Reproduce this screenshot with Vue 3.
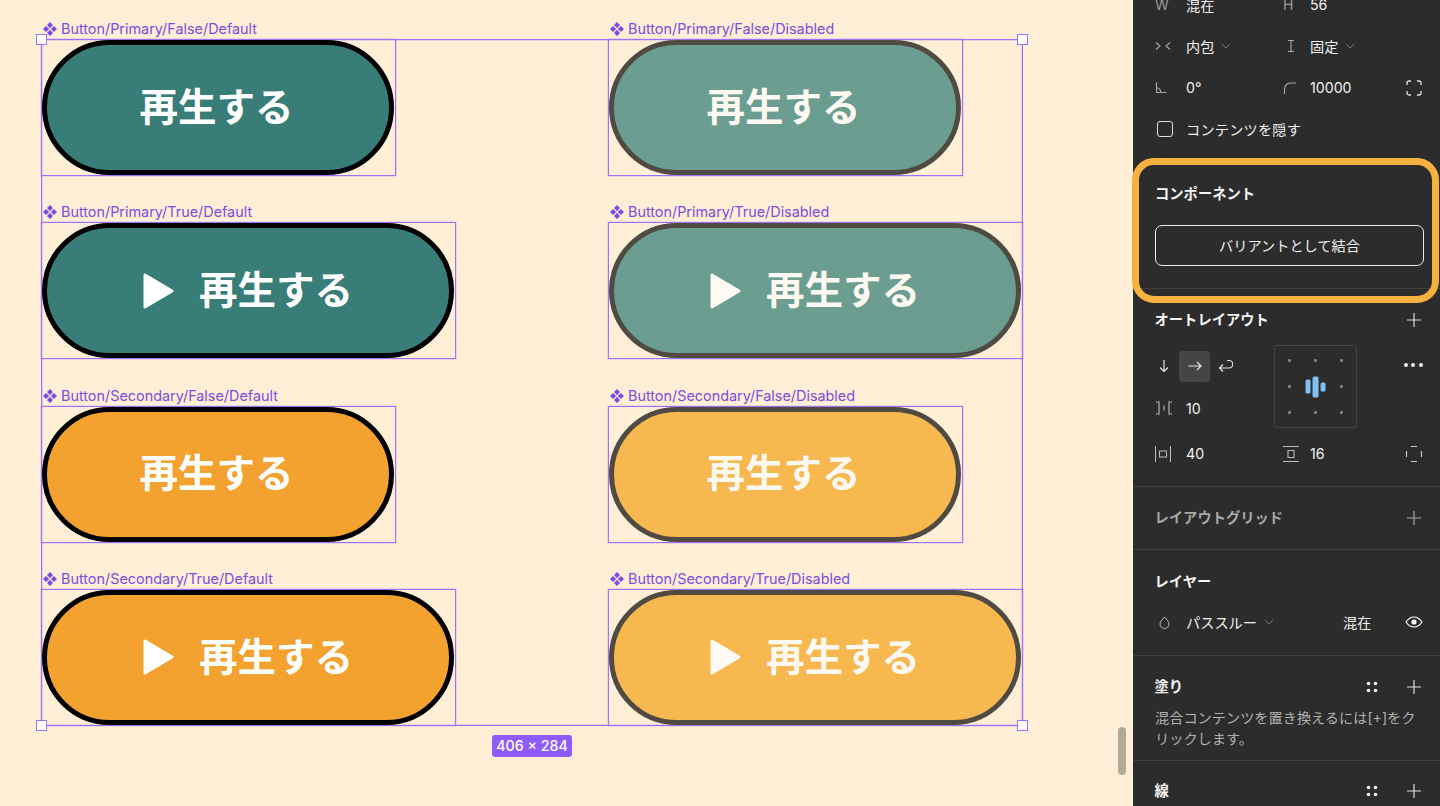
<script setup>
const buttons = [
  { name: 'Button/Primary/False/Default', tone: 'primary', icon: false, disabled: false },
  { name: 'Button/Primary/False/Disabled', tone: 'primary', icon: false, disabled: true },
  { name: 'Button/Primary/True/Default', tone: 'primary', icon: true, disabled: false },
  { name: 'Button/Primary/True/Disabled', tone: 'primary', icon: true, disabled: true },
  { name: 'Button/Secondary/False/Default', tone: 'secondary', icon: false, disabled: false },
  { name: 'Button/Secondary/False/Disabled', tone: 'secondary', icon: false, disabled: true },
  { name: 'Button/Secondary/True/Default', tone: 'secondary', icon: true, disabled: false },
  { name: 'Button/Secondary/True/Disabled', tone: 'secondary', icon: true, disabled: true }
]
</script>

<template>
  <div class="page">
    <main class="canvas">
      <div class="frame">
        <div v-for="b in buttons" :key="b.name" class="cell" :class="{ wide: b.icon }">
          <div class="tag">
            <svg width="14" height="14" viewBox="0 0 14 14"><path d="M7 0 10 3 7 6.200 4 3ZM3 4 6.200 7 3 10 0 7ZM11 4 14 7 11 10 7.800 7ZM7 7.800 10 11 7 14 4 11Z" fill="#7b4ce0"/></svg>
            <span>{{ b.name }}</span>
          </div>
          <div class="btn" :class="[b.tone, { off: b.disabled, bare: !b.icon }]">
            <svg v-if="b.icon" class="play" width="31" height="36" viewBox="0 0 31 36"><path d="M2 2 29 18 2 34Z" fill="currentColor" stroke="currentColor" stroke-width="3" stroke-linejoin="round"/></svg>
            <span class="label">再生する</span>
          </div>
        </div>
        <i class="handle tl"></i><i class="handle tr"></i><i class="handle bl"></i><i class="handle br"></i>
        <div class="size">406 × 284</div>
      </div>
      <div class="scroll"></div>
    </main>

    <aside class="panel">
      <section class="props">
        <div class="row">
          <span class="ico t">W</span><span>混在</span><span class="ico t">H</span><span>56</span>
        </div>
        <div class="row">
          <svg class="ico" width="16" height="12" viewBox="0 0 16 12"><path d="M1 2.500 5 6 1 9.500M15 2.500 11 6l4 3.500" fill="none" stroke="#aaa" stroke-width="1.100"/></svg>
          <span class="sel">内包<svg width="10" height="6" viewBox="0 0 10 6"><path d="M1 1l4 4 4-4" fill="none" stroke="#777"/></svg></span>
          <svg class="ico" width="16" height="16" viewBox="0 0 16 16"><path d="M5 2.500h6M5 13.500h6M8 2.500v11" fill="none" stroke="#aaa" stroke-width="1.100"/></svg>
          <span class="sel">固定<svg width="10" height="6" viewBox="0 0 10 6"><path d="M1 1l4 4 4-4" fill="none" stroke="#777"/></svg></span>
        </div>
        <div class="row">
          <svg class="ico" width="14" height="14" viewBox="0 0 14 14"><path d="M1.500 1.500v10h10M1.500 6.500c2.500.5 4 2.300 4.500 5" fill="none" stroke="#aaa" stroke-width="1.100"/></svg>
          <span>0°</span>
          <svg class="ico" width="14" height="14" viewBox="0 0 14 14"><path d="M1.500 13V8a6 6 0 0 1 6-6H13" fill="none" stroke="#aaa" stroke-width="1.100"/></svg>
          <span>10000</span>
          <svg class="end" width="16" height="16" viewBox="0 0 16 16"><path d="M1 5V3a2 2 0 0 1 2-2h2M11 1h2a2 2 0 0 1 2 2v2M15 11v2a2 2 0 0 1-2 2h-2M5 15H3a2 2 0 0 1-2-2v-2" fill="none" stroke="#e4e4e4" stroke-width="1.300"/></svg>
        </div>
        <div class="row">
          <i class="check"></i><span class="span3">コンテンツを隠す</span>
        </div>
      </section>

      <section class="comp">
        <h3>コンポーネント</h3>
        <div class="merge">バリアントとして結合</div>
      </section>
      <div class="ring"></div>

      <section class="auto">
        <div class="head"><h3>オートレイアウト</h3><svg class="plus" width="14" height="14" viewBox="0 0 14 14"><path d="M7 0v14M0 7h14" stroke="#ddd" stroke-width="1.200"/></svg></div>
        <div class="auto-grid">
          <div class="auto-left">
            <div class="dirs">
              <span class="dir"><svg width="12" height="14" viewBox="0 0 12 14"><path d="M6 1v11.500M2 8.500l4 4 4-4" fill="none" stroke="#e6e6e6" stroke-width="1.200"/></svg></span>
              <span class="dir on"><svg width="14" height="12" viewBox="0 0 14 12"><path d="M.500 6H13M9 2l4 4-4 4" fill="none" stroke="#e6e6e6" stroke-width="1.200"/></svg></span>
              <span class="dir"><svg width="15" height="14" viewBox="0 0 15 14"><path d="M9 1.500h2a3 3 0 0 1 0 7.500H1.500M5 5.500 1.500 9 5 12.500" fill="none" stroke="#e6e6e6" stroke-width="1.200"/></svg></span>
            </div>
            <div class="gap-row">
              <svg width="18" height="14" viewBox="0 0 18 14"><path d="M1 1h3v12H1M17 1h-3v12h3M9 4.500v5" fill="none" stroke="#bbb" stroke-width="1.100"/></svg>
              <span>10</span>
            </div>
          </div>
          <div class="align">
            <i v-for="n in 9" :key="n" class="dot"></i>
            <div class="bars"><b class="m"></b><b class="l"></b><b class="s"></b></div>
          </div>
          <div class="more"><i></i><i></i><i></i></div>
        </div>
        <div class="row pad">
          <svg class="ico" width="16" height="16" viewBox="0 0 16 16"><path d="M.500 0v16M15.500 0v16M4.500 5h7v6h-7z" fill="none" stroke="#bbb" stroke-width="1.100"/></svg>
          <span>40</span>
          <svg class="ico" width="16" height="16" viewBox="0 0 16 16"><path d="M0 .500h16M0 15.500h16M5 4.500h6v7H5z" fill="none" stroke="#bbb" stroke-width="1.100"/></svg>
          <span>16</span>
          <svg class="end" width="16" height="16" viewBox="0 0 16 16"><path d="M.500 5v6M15.500 5v6M5 .500h6M5 15.500h6" fill="none" stroke="#ccc" stroke-width="1.100"/></svg>
        </div>
      </section>

      <section class="lgrid">
        <div class="head"><h3 class="dim">レイアウトグリッド</h3><svg class="plus" width="14" height="14" viewBox="0 0 14 14"><path d="M7 0v14M0 7h14" stroke="#aaa" stroke-width="1.200"/></svg></div>
      </section>

      <section class="layer">
        <div class="head"><h3>レイヤー</h3></div>
        <div class="layer-row">
          <svg width="11" height="13" viewBox="0 0 11 13"><path d="M5.500 1C7 3 10 5.500 10 8a4.500 4.500 0 0 1-9 0c0-2.500 3-5 4.500-7Z" fill="none" stroke="#bbb"/></svg>
          <span class="sel name">パススルー<svg width="10" height="6" viewBox="0 0 10 6"><path d="M1 1l4 4 4-4" fill="none" stroke="#777"/></svg></span>
          <span class="mix">混在</span>
          <svg width="18" height="12" viewBox="0 0 18 12"><path d="M1 6c2-3 5-5 8-5s6 2 8 5c-2 3-5 5-8 5S3 9 1 6Z" fill="none" stroke="#fff" stroke-width="1.200"/><circle cx="9" cy="6" r="2.600" fill="#fff"/></svg>
        </div>
      </section>

      <section class="fill">
        <div class="head"><h3>塗り</h3>
          <div class="tools">
            <svg width="12" height="12" viewBox="0 0 12 12"><g fill="#eee"><circle cx="2.500" cy="2.500" r="1.800"/><circle cx="9.500" cy="2.500" r="1.800"/><circle cx="2.500" cy="9.500" r="1.800"/><circle cx="9.500" cy="9.500" r="1.800"/></g></svg>
            <svg class="plus" width="14" height="14" viewBox="0 0 14 14"><path d="M7 0v14M0 7h14" stroke="#ddd" stroke-width="1.200"/></svg>
          </div>
        </div>
        <p>混合コンテンツを置き換えるには[+]をクリックします。</p>
      </section>

      <section class="stroke">
        <div class="head"><h3>線</h3>
          <div class="tools">
            <svg width="12" height="12" viewBox="0 0 12 12"><g fill="#eee"><circle cx="2.500" cy="2.500" r="1.800"/><circle cx="9.500" cy="2.500" r="1.800"/><circle cx="2.500" cy="9.500" r="1.800"/><circle cx="9.500" cy="9.500" r="1.800"/></g></svg>
            <svg class="plus" width="14" height="14" viewBox="0 0 14 14"><path d="M7 0v14M0 7h14" stroke="#ddd" stroke-width="1.200"/></svg>
          </div>
        </div>
      </section>
    </aside>
  </div>
</template>

<style>
html, body { margin: 0; overflow: hidden; }
</style>

<style scoped>
.page {
  display: flex;
  width: 1440px;
  height: 806px;
  overflow: hidden;
  background: #ffefd6;
  font-family: Inter, "Noto Sans CJK JP", sans-serif;
}
.canvas {
  position: relative;
  flex: 0 0 1133px;
  box-sizing: border-box;
  padding: 39px 0 0 41px;
}
.frame {
  position: relative;
  display: grid;
  grid-template-columns: 567px 415px;
  grid-template-rows: repeat(4, 137px);
  row-gap: 46.33px;
  width: 982px;
  height: 687px;
  box-shadow: inset 0 0 0 1px #9d72fb, inset 0 0 0 2px rgba(157, 114, 251, .25);
}
.cell {
  position: relative;
  box-sizing: border-box;
  width: 355px;
  border: 1px solid #9d72fb;
  box-shadow: 0 0 0 .5px rgba(157, 114, 251, .4);
  display: flex;
}
.cell.wide { width: 415px; }
.tag {
  position: absolute;
  left: 0;
  top: -20px;
  display: flex;
  align-items: center;
  gap: 4px;
  color: #7b4ce0;
  font-size: 14.400px;
  line-height: 18px;
  white-space: nowrap;
  transform: translateX(1px);
}
.btn {
  flex: 1;
  margin-right: 1px;
  box-sizing: border-box;
  display: flex;
  align-items: center;
  justify-content: center;
  gap: 25px;
  border: 5px solid #000;
  border-radius: 68px;
  color: #fff;
  font-size: 38.500px;
  font-weight: 700;
  line-height: 1;
}
.label { margin-top: -1px; }
.bare .label { margin-right: 3px; }
.btn.primary { background: #387d78; }
.btn.secondary { background: #f4a22f; }
.btn.off { border-color: #4f4a42; color: #fef9f2; }
.btn.primary.off { background: #6b9e91; }
.btn.secondary.off { background: #f6b84f; }
.play { flex: none; }
.handle {
  position: absolute;
  z-index: 2;
  width: 11px;
  height: 11px;
  box-sizing: border-box;
  background: #fff;
  border: 1.500px solid #9d72fb;
}
.tl { left: -5px; top: -5px; }
.tr { right: -5px; top: -5px; }
.bl { left: -5px; bottom: -5px; }
.br { right: -5px; bottom: -5px; }
.size {
  position: absolute;
  left: 451px;
  top: 696px;
  width: 80px;
  height: 22px;
  border-radius: 3px;
  background: #8f5cfb;
  color: #fff;
  font-size: 14.200px;
  font-weight: 500;
  line-height: 22px;
  text-align: center;
}
.scroll {
  position: absolute;
  left: 1118px;
  top: 727px;
  width: 8px;
  height: 48px;
  border-radius: 4px;
  background: #b3a999;
}
.panel {
  position: relative;
  flex: 1;
  background: #2c2c2c;
  color: #f0f0f0;
  font-size: 14.200px;
}
section { box-sizing: border-box; }
h3 {
  margin: 0;
  font-size: 14.300px;
  font-weight: 700;
  line-height: 20px;
  color: #f4f4f4;
}
h3.dim { color: #a8a8a8; }
.props { margin-top: -16px; height: 181px; }
.row {
  display: grid;
  grid-template-columns: 31px 97px 27px 96px 16px;
  align-items: center;
  height: 41.500px;
  padding-left: 22px;
}
.ico { color: #999; }
.t { font-size: 14px; color: #9a9a9a; }
.end { grid-column: 5; }
.sel { display: inline-flex; align-items: center; gap: 7px; }
.check {
  width: 16px;
  height: 16px;
  margin-left: 2px;
  border: 1.300px solid #ddd;
  border-radius: 3px;
  box-sizing: border-box;
}
.span3 { grid-column: 2 / 5; letter-spacing: .2px; }
.comp {
  height: 124px;
  padding: 19px 22px 0;
  border-bottom: 1px solid #404040;
}
.merge {
  margin: 21px -6px 0 0;
  height: 41px;
  padding-bottom: 2px;
  box-sizing: border-box;
  border: 1.300px solid #ececec;
  border-radius: 7px;
  display: flex;
  align-items: center;
  justify-content: center;
}
.ring {
  position: absolute;
  left: -1px;
  top: 158px;
  width: 307px;
  height: 145px;
  box-sizing: border-box;
  border: 7px solid #f6b13e;
  border-radius: 22px;
  pointer-events: none;
}
.head {
  display: flex;
  align-items: center;
  justify-content: space-between;
  height: 20px;
  padding: 0 19px 0 21.500px;
}
.auto {
  height: 198px;
  padding-top: 21px;
  border-bottom: 1px solid #404040;
}
.auto-grid {
  display: grid;
  grid-template-columns: 119px 83px 1fr;
  margin-top: 15px;
  padding-left: 22px;
}
.auto-left { display: flex; flex-direction: column; }
.dirs { display: flex; align-items: center; height: 32px; margin-top: 5px; margin-left: -7px; }
.dir {
  width: 31px;
  height: 31px;
  display: flex;
  align-items: center;
  justify-content: center;
  border-radius: 3px;
}
.dir.on { background: #454545; }
.gap-row { display: flex; align-items: center; gap: 13px; margin-top: 16px; height: 20px; }
.align {
  position: relative;
  box-sizing: border-box;
  width: 83px;
  height: 83px;
  border: 1.300px solid #444;
  border-radius: 3px;
  display: grid;
  grid-template-columns: repeat(3, 26px);
  grid-template-rows: repeat(3, 26px);
  place-items: center;
  padding: 1.500px;
}
.dot { width: 2.500px; height: 2.500px; border-radius: 50%; background: #858585; }
.bars {
  position: absolute;
  left: 50%;
  top: 50%;
  transform: translate(-50%, -50%);
  display: flex;
  align-items: center;
  gap: 2.500px;
}
.bars b { display: block; width: 5.300px; border-radius: 1.500px; background: #83bff3; }
.bars .m { height: 14px; }
.bars .l { height: 21px; }
.bars .s { height: 9px; }
.more { display: flex; gap: 3.500px; justify-content: flex-end; margin: 18px 17.500px 0 0; height: 4px; }
.more i { width: 4px; height: 4px; border-radius: 50%; background: #eee; }
.pad { margin-top: 5px; }
.lgrid {
  height: 63px;
  padding-top: 21px;
  border-bottom: 1px solid #404040;
}
.layer {
  height: 106px;
  padding-top: 22px;
  border-bottom: 1px solid #404040;
}
.layer-row {
  display: grid;
  grid-template-columns: 31px 153px 62px 18px;
  align-items: center;
  padding-left: 26px;
  margin-top: 20px;
  height: 20px;
}
.name { margin-left: -4px; }
.fill {
  height: 105px;
  padding-top: 20.500px;
  border-bottom: 1px solid #404040;
}
.tools { display: flex; align-items: center; gap: 29px; }
.fill p {
  margin: 10px 22px 0;
  color: #b0b0b0;
  font-size: 14.200px;
  line-height: 21px;
}
.stroke { padding-top: 20px; }
</style>
